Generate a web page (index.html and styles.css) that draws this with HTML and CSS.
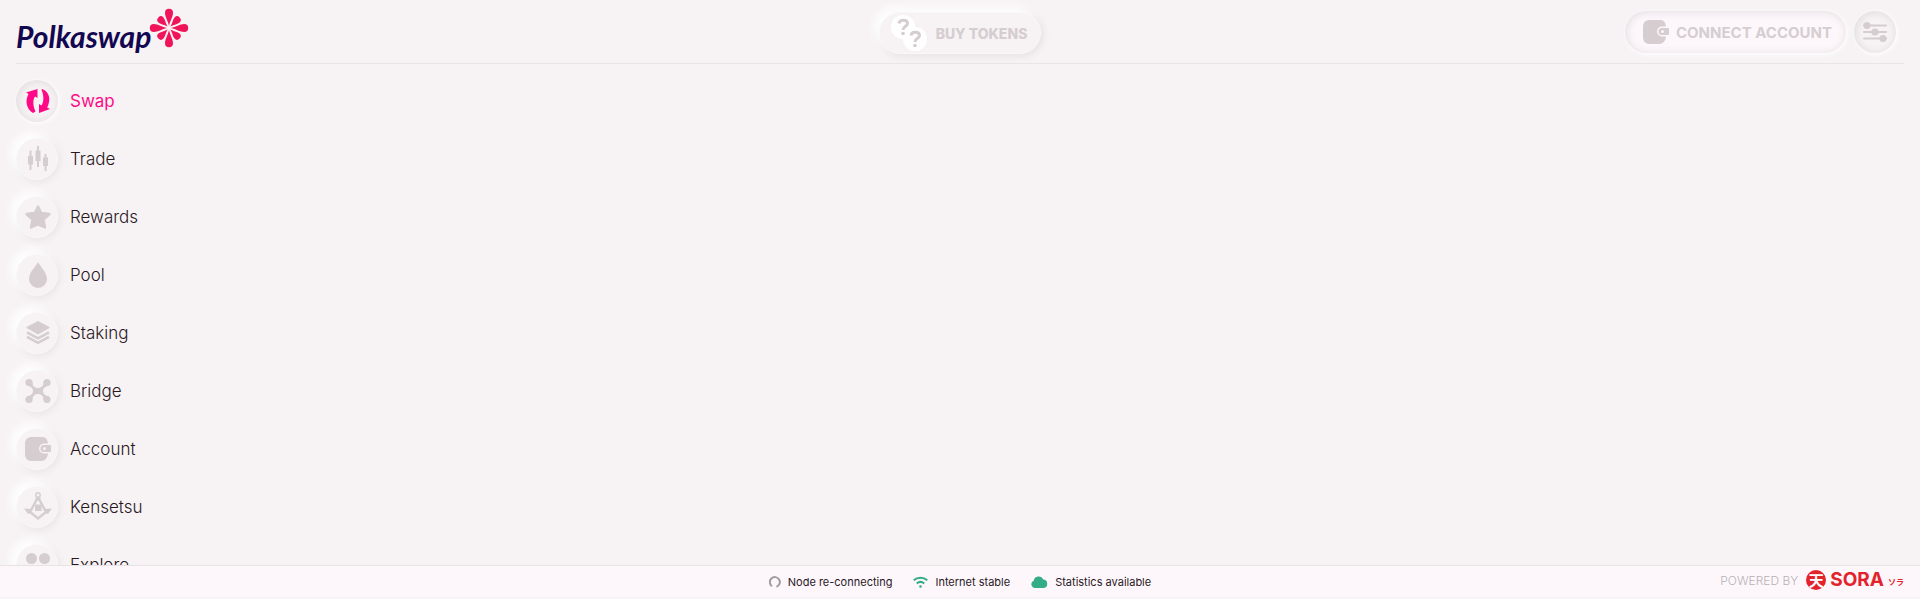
FILE: index.html
```html
<!DOCTYPE html>
<html lang="en">
<head>
<meta charset="utf-8">
<title>Polkaswap</title>
<link rel="stylesheet" href="styles.css">
</head>
<body>
<svg class="defs" width="0" height="0" aria-hidden="true">
  <symbol id="wallet" viewBox="0 0 26 24">
    <path d="M7 0h10c3.500 0 5.500 2 6 6.500h-4a5 5 0 0 0 0 10h4C22.500 21 20 24 16 24H7c-4.500 0-7-2.500-7-7V7c0-4.500 2.500-7 7-7z"/>
    <path fill-rule="evenodd" d="M19 8h6a1 1 0 0 1 1 1v5a1 1 0 0 1-1 1h-6a3.500 3.500 0 0 1 0-7zm.5 2a1.500 1.500 0 1 0 0 3 1.500 1.500 0 0 0 0-3z"/>
  </symbol>
</svg>
<header class="header">
  <a class="logo" href="#" aria-label="Polkaswap">
    <span class="logo-text">Polkaswap</span>
    <svg class="logo-mark" viewBox="-20 -20 40 40">
      <defs><path id="petal" d="M0-2C-1-7-4-11-4-15.200a4 4 0 0 1 8 0C4-11 1-7 0-2z"/><path id="petal-s" d="M0-2C-1-6-3.600-9-3.600-11.400a3.600 3.600 0 0 1 7.200 0C3.600-9 1-6 0-2z"/></defs>
      <use href="#petal"/><use href="#petal" transform="rotate(90)"/><use href="#petal" transform="rotate(180)"/><use href="#petal" transform="rotate(270)"/>
      <use href="#petal-s" transform="rotate(45)"/><use href="#petal-s" transform="rotate(135)"/><use href="#petal-s" transform="rotate(225)"/><use href="#petal-s" transform="rotate(315)"/>
    </svg>
  </a>
  <button class="pill buy" type="button">
    <svg class="tokens" viewBox="0 0 36 36" aria-hidden="true">
      <g fill="#fff"><circle cx="12" cy="12" r="12"/><circle cx="24" cy="24" r="12"/></g>
      <g fill="none" stroke="#d5cdd0" stroke-width="3"><path id="q" d="M8 8.500c.5-4.500 8.500-4 8.500 0 0 3-4.500 2.500-4.500 6.500"/><use href="#q" x="12" y="12"/></g>
      <g fill="#d5cdd0"><circle cx="12" cy="18.500" r="1.800"/><circle cx="24" cy="30.500" r="1.800"/></g>
    </svg>
    <span>BUY TOKENS</span>
  </button>
  <div class="actions">
    <button class="pill connect" type="button">
      <svg class="wallet" aria-hidden="true"><use href="#wallet"/></svg>
      <span>CONNECT ACCOUNT</span>
    </button>
    <button class="round pressed" type="button" aria-label="Settings">
      <svg class="icon" viewBox="0 0 24 24"><g stroke="currentColor" stroke-width="2" stroke-linecap="round"><path d="M1 5.500h22M1 12h22M1 18.500h22"/></g><circle cx="4" cy="5.500" r="3.600"/><circle cx="12" cy="12" r="3.600"/><circle cx="20" cy="18.500" r="3.600"/></svg>
    </button>
  </div>
</header>
<main class="main">
  <nav class="menu">
    <a class="item active" href="#"><span class="round pressed"><svg class="icon" viewBox="0 0 24 24"><path d="M0 3.500 11.500 0v9L9 7.500c-2 3-2.500 8 .5 15L7 24C0 20-1 11 2.500 5z"/><path d="M16 0c8 3 9 11 5.200 18.500l2.800 1.500-11 4v-9l2.500 1.500C18 13 18 6 15.500 1z"/></svg></span><span>Swap</span></a>
    <a class="item" href="#"><span class="round"><svg class="icon" viewBox="0 0 24 24"><path d="M3.500 3.500h2V9H7v8.500H5.500V23h-2v-5.500H2V9h1.500zM11-1h2v4.500h1.500V14H13v6h-2v-6H9.500V3.500H11zM18.500 7h2v3.500H22v8.500h-1.500v5h-2v-5H17v-8.500h1.500z"/></svg></span><span>Trade</span></a>
    <a class="item" href="#"><span class="round"><svg class="icon" viewBox="0 0 24 24"><path stroke="currentColor" stroke-width="2.400" stroke-linejoin="round" d="m12 1.500 3.200 6.500 8.300 1-6 5.500 1.500 8L12 19.500 5 22.500l1.500-8L.5 9l8.300-1z"/></svg></span><span>Rewards</span></a>
    <a class="item" href="#"><span class="round"><svg class="icon" viewBox="0 0 24 24"><path d="M12-1c1.500 4 9 10 9 17a9 9 0 0 1-18 0C3 9 10.500 3 12-1z"/></svg></span><span>Pool</span></a>
    <a class="item" href="#"><span class="round"><svg class="icon" viewBox="0 0 24 24"><path d="m12 0 11.500 6v1L12 13.500.5 7V6z"/><path fill="none" stroke="currentColor" stroke-width="2.600" d="m1 11.300 11 6 11-6M1 15.800l11 6 11-6"/></svg></span><span>Staking</span></a>
    <a class="item" href="#"><span class="round"><svg class="icon" viewBox="0 0 24 24"><circle cx="3" cy="3.500" r="3.600"/><circle cx="21" cy="3.500" r="3.600"/><circle cx="3" cy="20.500" r="3.600"/><circle cx="21" cy="20.500" r="3.600"/><path d="M6 2c.5 5 2.500 7 6 7s5.500-2 6-7l5 4.500c-5 1.500-6 3.500-6 5.500s1 4 6 5.500L18 22c-.5-5-2.500-7-6-7s-5.500 2-6 7l-5-4.500C6 16 7 14 7 12S6 8 1 6.500z"/></svg></span><span>Bridge</span></a>
    <a class="item" href="#"><span class="round"><svg class="wallet" aria-hidden="true"><use href="#wallet"/></svg></span><span>Account</span></a>
    <a class="item" href="#"><span class="round"><svg class="icon" viewBox="0 0 24 24"><g fill="none" stroke="currentColor"><circle cx="12" cy="0" r="2.200" stroke-width="1.500"/><path stroke-width="2.400" d="M11.500 3 3.500 18M12.500 3l8 15M1 14.500 12 23.500l11-9"/></g><path d="M-2 13.500 5 14l-1 3 2 .5-4 1.500zM26 13.500 19 14l1 3-2 .5 4 1.500zM9 9.500h6.500V16H9zM9.500 2.500h5v3h-5z"/></svg></span><span>Kensetsu</span></a>
    <a class="item" href="#"><span class="round"><svg class="icon" viewBox="0 0 24 24"><circle cx="5.500" cy="5.500" r="5.500"/><circle cx="18.500" cy="5.500" r="5.500"/><circle cx="5.500" cy="18.500" r="5.500"/><circle cx="18.500" cy="18.500" r="5.500"/></svg></span><span>Explore</span></a>
  </nav>
</main>
<footer class="footer">
  <div class="statuses">
    <div class="status"><svg width="12" height="12" viewBox="0 0 12 12"><path fill="none" stroke="#a19a9d" stroke-width="2" d="M3 10.200A5 5 0 1 1 7.500 10.800"/></svg><span>Node re-connecting</span></div>
    <div class="status"><svg width="15" height="12" viewBox="0 0 15 12"><path fill="none" stroke="#34ad87" stroke-width="2" d="M.7 4.300a10 10 0 0 1 13.600 0M3.700 7.400a6 6 0 0 1 7.600 0"/><circle cx="7.500" cy="10.500" r="1.300" fill="#34ad87"/></svg><span>Internet stable</span></div>
    <div class="status"><svg width="17" height="12" viewBox="0 0 17 12"><path fill="#34ad87" d="M4 12a3.800 3.800 0 0 1-1.300-7.300A5 5 0 0 1 12.200 3.500 4.300 4.300 0 0 1 12.800 12z"/></svg><span>Statistics available</span></div>
  </div>
  <a class="powered" href="#"><span class="powered-label">POWERED BY</span><span class="sora-mark">天</span><span class="sora-name">SORA</span><span class="sora-kana">ソラ</span></a>
</footer>
</body>
</html>
```
FILE: styles.css
```css
* { box-sizing: border-box; }

body {
  margin: 0;
  height: 100vh;
  display: flex;
  flex-direction: column;
  overflow: hidden;
  background: #f7f3f4;
  color: #2a171f;
  font-family: Inter, "Liberation Sans", sans-serif;
  font-size: 17px;
}

.defs { display: block; }

a { color: inherit; text-decoration: none; }

button { font: inherit; border: 0; padding: 0; cursor: pointer; }

svg { flex: none; }

.header {
  flex: none;
  display: grid;
  grid-template-columns: 1fr auto 1fr;
  align-items: center;
  margin: 0 16px;
  height: 64px;
  border-bottom: 1px solid #e9e4e6;
}

.logo { display: flex; align-items: center; justify-self: start; height: 64px; }

.logo-text {
  width: 133px;
  padding-top: 8px;
  color: #120750;
  font-family: Lato, sans-serif;
  font-size: 30px;
  font-style: italic;
  font-weight: 700;
}

.logo-mark { width: 40px; height: 40px; margin-bottom: 8px; fill: #f0145a; }

.pill {
  display: flex;
  align-items: center;
  height: 42px;
  border-radius: 21px;
  color: #d5cdd0;
  font-size: 15px;
  font-weight: 700;
  white-space: nowrap;
}

.buy {
  gap: 9px;
  margin-top: 2px;
  padding: 0 13px 0 11px;
  background: #f7f3f4;
  border: 1px solid #f9f7f7;
  font-size: 14px;
  font-weight: 800;
  box-shadow: -5px -5px 10px #fff, 1px 1px 10px rgba(0, 0, 0, 0.1);
}

.tokens { width: 36px; height: 36px; }

.actions { display: flex; justify-self: end; gap: 8px; margin-right: 8px; }

.connect {
  gap: 7px;
  padding: 0 14px 0 18px;
  background: #fdf7fb;
  box-shadow: 1px 1px 5px #fff, inset 1px 1px 10px rgba(0, 0, 0, 0.1);
}

.wallet { width: 26px; height: 24px; fill: currentColor; }

.round {
  flex: none;
  display: flex;
  align-items: center;
  justify-content: center;
  width: 42px;
  height: 42px;
  border: 1px solid #f9f7f7;
  border-radius: 50%;
  background: #f7f3f4;
  color: #d5cdd0;
  box-shadow: -5px -5px 10px #fff, 1px 1px 10px rgba(0, 0, 0, 0.08);
}

.pressed {
  border: 0;
  box-shadow: 1px 1px 5px #fff, inset 1px 1px 10px rgba(0, 0, 0, 0.1);
}

.icon { width: 24px; height: 24px; fill: currentColor; overflow: visible; }

.main { flex: 1; min-height: 0; overflow: hidden; }

.menu {
  display: flex;
  flex-direction: column;
  align-items: flex-start;
  gap: 16px;
  padding: 16px;
}

.item { display: flex; align-items: center; gap: 12px; font-weight: 300; }

.item .round { padding-left: 2px; }

.active { color: #ff0a86; font-weight: 400; }

.active .round { color: #ff0a86; padding-left: 1px; }

.footer {
  flex: none;
  display: grid;
  grid-template-columns: 1fr auto 1fr;
  align-items: center;
  height: 34px;
  padding: 0 16px;
  background: #fdf7fb;
  border-top: 1px solid #e7e2e4;
  border-bottom: 2px solid #f7f3f4;
}

.statuses { grid-column: 2; display: flex; gap: 21px; font-size: 11px; font-weight: 400; }

.status { display: flex; align-items: center; gap: 7px; }

.powered { justify-self: end; display: flex; align-items: center; padding-bottom: 3px; color: #e3232c; }

.powered-label { margin-right: 8px; color: #b9b1b5; font-size: 12px; font-weight: 300; }

.sora-mark {
  width: 20px;
  height: 20px;
  border-radius: 50%;
  background: #e3232c;
  color: #fff;
  font: 700 15px/19px "Noto Sans CJK JP", sans-serif;
  text-align: center;
}

.sora-name { margin: 0 4px; font-size: 19px; font-weight: 700; line-height: 20px; }

.sora-kana { font: 700 8px/12px "Noto Sans CJK JP", sans-serif; padding-top: 4px; }
```
